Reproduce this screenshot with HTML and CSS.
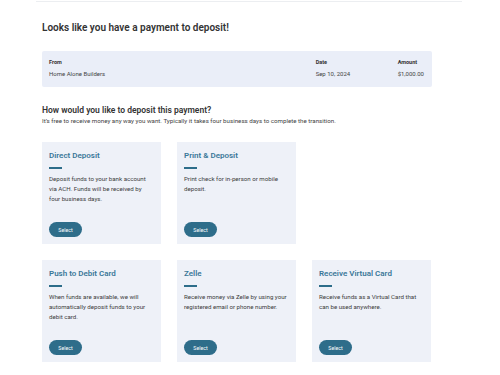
FILE: index.html
```html
<!DOCTYPE html>
<html>
<head>
<meta charset="utf-8">
<link rel="stylesheet" href="styles.css">
</head>
<body>
<div class="topbar"></div>
<main class="page">
  <h1 class="title">Looks like you have a payment to deposit!</h1>
  <section class="info">
    <div class="info-col">
      <div class="info-label">From</div>
      <div class="info-value">Home Alone Builders</div>
    </div>
    <div class="info-col">
      <div class="info-label">Date</div>
      <div class="info-value">Sep 10, 2024</div>
    </div>
    <div class="info-col">
      <div class="info-label">Amount</div>
      <div class="info-value">$1,000.00</div>
    </div>
  </section>
  <h2 class="subtitle">How would you like to deposit this payment?</h2>
  <p class="lead">It’s free to receive money any way you want. Typically it takes four business days to complete the transition.</p>
  <div class="cards">
    <div class="card">
      <h3 class="card-title">Direct Deposit</h3>
      <div class="card-bar"></div>
      <p class="card-text">Deposit funds to your bank account via ACH. Funds will be received by four business days.</p>
      <button class="btn">Select</button>
    </div>
    <div class="card">
      <h3 class="card-title">Print &amp; Deposit</h3>
      <div class="card-bar"></div>
      <p class="card-text">Print check for in-person or mobile deposit.</p>
      <button class="btn">Select</button>
    </div>
    <div class="card-empty"></div>
    <div class="card">
      <h3 class="card-title">Push to Debit Card</h3>
      <div class="card-bar"></div>
      <p class="card-text">When funds are available, we will automatically deposit funds to your debit card.</p>
      <button class="btn">Select</button>
    </div>
    <div class="card">
      <h3 class="card-title">Zelle</h3>
      <div class="card-bar"></div>
      <p class="card-text">Receive money via Zelle by using your registered email or phone number.</p>
      <button class="btn">Select</button>
    </div>
    <div class="card">
      <h3 class="card-title">Receive Virtual Card</h3>
      <div class="card-bar"></div>
      <p class="card-text">Receive funds as a Virtual Card that can be used anywhere.</p>
      <button class="btn">Select</button>
    </div>
  </div>
</main>
</body>
</html>
```
FILE: styles.css
```css
* { box-sizing: border-box; }
html, body { margin: 0; padding: 0; background: #fff; }
body {
  font-family: Roboto, "Noto Sans", sans-serif;
  color: #3a3a3a;
  width: 500px;
  height: 375px;
  overflow: hidden;
}
.topbar {
  margin-left: 36px;
  width: 426px;
  height: 2px;
  border-bottom: 1px solid #eceef1;
}
.page {
  padding: 0 0 0 42px;
}
.title {
  margin: 19px 0 0;
  font-size: 10px;
  line-height: 14px;
  font-weight: 600;
  color: #333;
}
.info {
  margin-top: 16px;
  width: 390px;
  height: 36px;
  background: #eaeef8;
  border-radius: 2px;
  padding: 7px 8px 0 7px;
  display: grid;
  grid-template-columns: 1fr 82px auto;
}
.info-label {
  font-size: 5.5px;
  line-height: 8px;
  font-weight: 700;
  color: #333;
}
.info-value {
  margin-top: 4px;
  font-size: 6px;
  line-height: 8px;
  color: #444;
}
.subtitle {
  margin: 17px 0 0;
  font-size: 8.5px;
  line-height: 12px;
  font-weight: 600;
  color: #333;
}
.lead {
  margin: 1px 0 0;
  font-size: 6.2px;
  line-height: 9px;
  color: #444;
}
.cards {
  margin-top: 16px;
  display: grid;
  grid-template-columns: repeat(3, 119px);
  grid-auto-rows: 102px;
  column-gap: 16px;
  row-gap: 16px;
}
.card {
  background: #eef1f8;
  padding: 8px 7px 7px;
  display: flex;
  flex-direction: column;
  align-items: flex-start;
}
.card-title {
  margin: 0;
  font-size: 8px;
  line-height: 11px;
  font-weight: 600;
  color: #3a7898;
}
.card-bar {
  margin-top: 6px;
  width: 13px;
  height: 2px;
  background: #2d6d8a;
}
.card-text {
  margin: 5px 0 0;
  font-size: 6.15px;
  line-height: 10px;
  color: #3d3d3d;
}
.btn {
  margin-top: auto;
  width: 33px;
  height: 15px;
  border: 0;
  border-radius: 8px;
  background: #2e6d8a;
  color: #fff;
  font-family: inherit;
  font-size: 5.2px;
  padding: 0;
}
```
